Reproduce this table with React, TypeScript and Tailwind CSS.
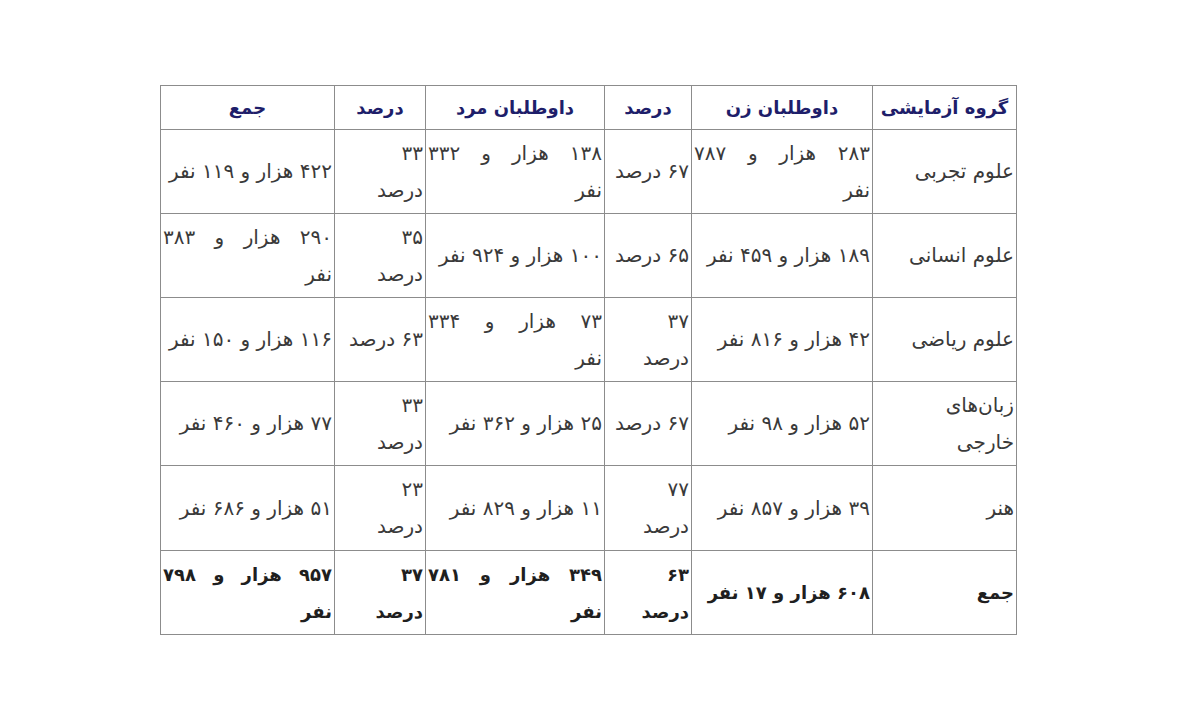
import React from "react";

type Cell = string[]; // lines

const widths = [144, 181, 87, 179, 91, 174];

const header = ["گروه آزمایشی", "داوطلبان زن", "درصد", "داوطلبان مرد", "درصد", "جمع"];

const rows: Cell[][] = [
  [["علوم تجربی"], ["۲۸۳ هزار و ۷۸۷", "نفر"], ["۶۷ درصد"], ["۱۳۸ هزار و ۳۳۲", "نفر"], ["۳۳", "درصد"], ["۴۲۲ هزار و ۱۱۹ نفر"]],
  [["علوم انسانی"], ["۱۸۹ هزار و ۴۵۹ نفر"], ["۶۵ درصد"], ["۱۰۰ هزار و ۹۲۴ نفر"], ["۳۵", "درصد"], ["۲۹۰ هزار و ۳۸۳", "نفر"]],
  [["علوم ریاضی"], ["۴۲ هزار و ۸۱۶ نفر"], ["۳۷", "درصد"], ["۷۳ هزار و ۳۳۴", "نفر"], ["۶۳ درصد"], ["۱۱۶ هزار و ۱۵۰ نفر"]],
  [["زبان‌های", "خارجی"], ["۵۲ هزار و ۹۸ نفر"], ["۶۷ درصد"], ["۲۵ هزار و ۳۶۲ نفر"], ["۳۳", "درصد"], ["۷۷ هزار و ۴۶۰ نفر"]],
  [["هنر"], ["۳۹ هزار و ۸۵۷ نفر"], ["۷۷", "درصد"], ["۱۱ هزار و ۸۲۹ نفر"], ["۲۳", "درصد"], ["۵۱ هزار و ۶۸۶ نفر"]],
  [["جمع"], ["۶۰۸ هزار و ۱۷ نفر"], ["۶۳", "درصد"], ["۳۴۹ هزار و ۷۸۱", "نفر"], ["۳۷", "درصد"], ["۹۵۷ هزار و ۷۹۸", "نفر"]],
];

function CellContent({ lines }: { lines: Cell }) {
  return (
    <div className="flex flex-col">
      {lines.map((line, i) => {
        const words = line.split(" ");
        const justify = lines.length > 1 && i < lines.length - 1 && words.length > 1;
        if (justify) {
          return (
            <div key={i} className="flex justify-between leading-[37px]">
              {words.map((w, j) => (
                <span key={j}>{w}</span>
              ))}
            </div>
          );
        }
        return (
          <div key={i} className="leading-[37px] whitespace-nowrap">
            {line}
          </div>
        );
      })}
    </div>
  );
}

export default function App() {
  return (
    <div className="min-h-[723px] w-[1200px] bg-white pl-[160px] pt-[85px]">
      <table
        dir="rtl"
        className="w-[857px] table-fixed border-collapse text-[20px] text-[#3a3a3a]"
        style={{ fontFamily: '"DejaVu Sans", Tahoma, sans-serif' }}
      >
        <colgroup>
          {widths.map((w, i) => (
            <col key={i} style={{ width: w }} />
          ))}
        </colgroup>
        <thead>
          <tr className="h-[44px]">
            {header.map((h, i) => (
              <th
                key={i}
                className="border border-[#8c8c8c] px-[3px] text-center align-middle text-[18px] font-bold text-[#1e1e6a]"
              >
                {h}
              </th>
            ))}
          </tr>
        </thead>
        <tbody>
          {rows.map((r, ri) => (
            <tr key={ri} className={ri === 4 ? "h-[85px]" : "h-[84px]"}>
              {r.map((c, ci) => (
                <td
                  key={ci}
                  className={
                    "overflow-hidden border border-[#8c8c8c] px-[2px] text-right align-middle " +
                    (ri === rows.length - 1 ? "text-[18px] font-bold text-[#1f1f1f]" : "")
                  }
                >
                  <CellContent lines={c} />
                </td>
              ))}
            </tr>
          ))}
        </tbody>
      </table>
    </div>
  );
}
